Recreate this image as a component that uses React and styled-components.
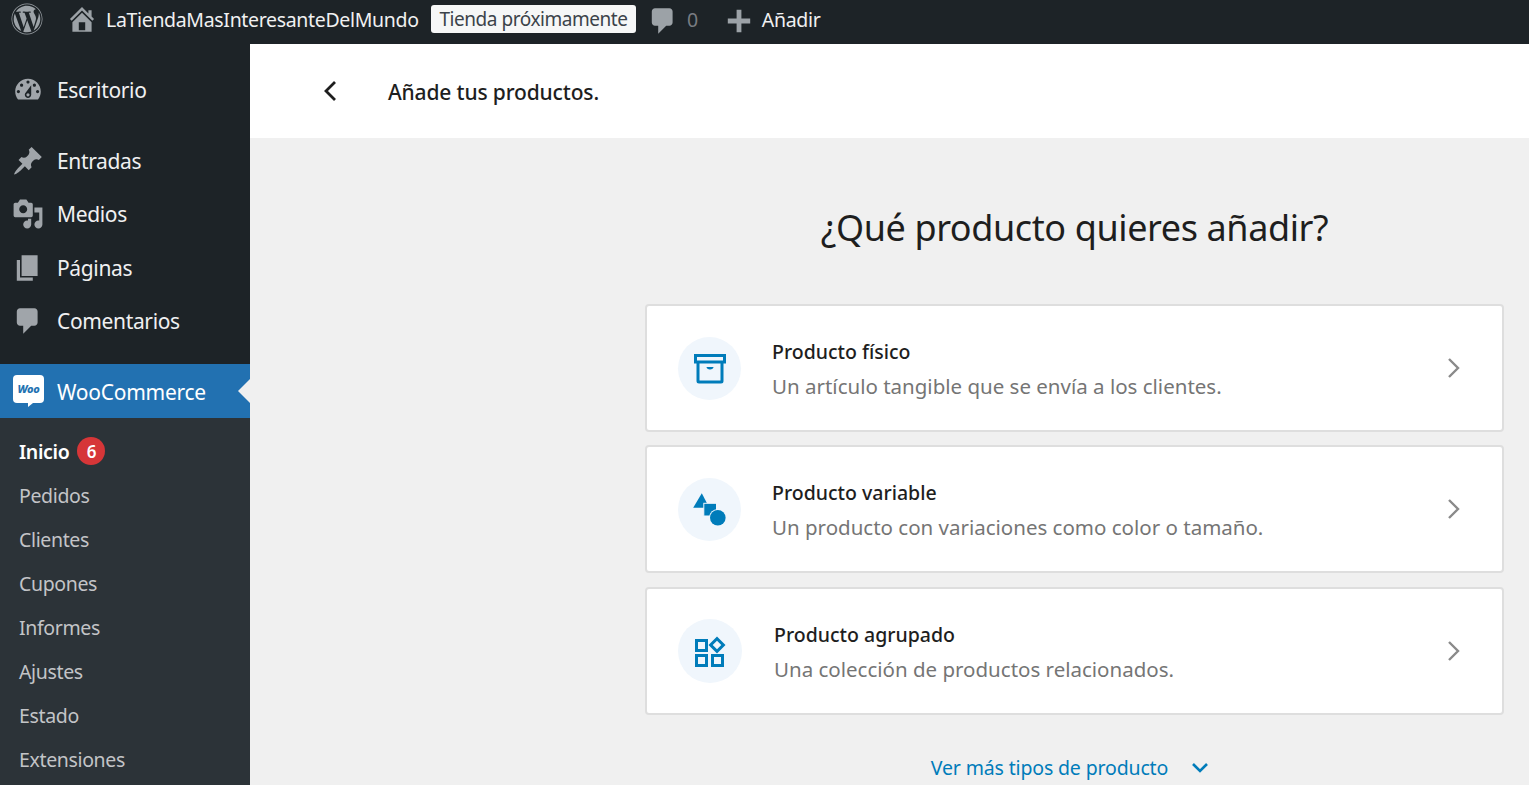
import React from "react";
import styled, { createGlobalStyle } from "styled-components";
import { FaWordpress } from "react-icons/fa";

const GlobalStyle = createGlobalStyle`
  html, body {
    margin: 0;
    padding: 0;
    height: 785px;
    overflow: hidden;
    background: #f0f0f0;
    font-family: "Noto Sans", "Open Sans", sans-serif;
  }
  * { box-sizing: border-box; }
`;

const Page = styled.div`
  width: 1529px;
  height: 785px;
  display: flex;
  flex-direction: column;
  overflow: hidden;
`;

const TopBar = styled.div`
  height: 44px;
  flex: none;
  background: #1d2327;
  display: flex;
  align-items: center;
  color: #f0f0f1;
  font-size: 19.5px;
  letter-spacing: -0.33px;
`;

const BarIcon = styled.svg`
  fill: #9ca2a7;
  flex: none;
  margin-left: ${(p) => p.$left}px;
  margin-right: ${(p) => p.$right}px;
  margin-bottom: ${(p) => p.$lift}px;
`;

const Logo = styled(FaWordpress)`
  color: #9ca2a7;
  font-size: 32px;
  margin-left: 11px;
  margin-right: 23px;
  margin-bottom: 6px;
  flex: none;
`;

const BarText = styled.span`
  white-space: nowrap;
  margin-bottom: 6px;
`;

const SiteName = styled(BarText)`
  width: 312px;
`;

const ComingSoon = styled.span`
  margin-left: 13px;
  margin-bottom: 6px;
  width: 205px;
  height: 28px;
  background: #f6f7f7;
  border-radius: 3px;
  color: #3c434a;
  font-size: 19px;
  letter-spacing: -0.45px;
  display: flex;
  align-items: center;
  justify-content: center;
  white-space: nowrap;
`;

const CommentCount = styled(BarText)`
  color: #787c82;
  margin-left: 8px;
`;

const Body = styled.div`
  flex: 1;
  display: flex;
  min-height: 0;
`;

const Sidebar = styled.nav`
  width: 250px;
  flex: none;
  background: #1d2327;
  padding-top: 19px;
`;

const MenuItem = styled.div`
  height: 53.5px;
  display: flex;
  align-items: center;
  color: #f0f0f1;
  font-size: 21px;
  letter-spacing: -0.35px;
  margin-bottom: ${(p) => p.$gap || 0}px;
`;

const MenuIcon = styled.svg`
  width: 32px;
  height: 32px;
  fill: #a0a5aa;
  margin-left: 12px;
  margin-right: 13px;
  flex: none;
`;

const ActiveItem = styled.div`
  position: relative;
  height: 54px;
  margin-top: 16px;
  padding-top: 1px;
  background: #2271b1;
  display: flex;
  align-items: center;
  color: #fff;
  font-size: 21px;
  letter-spacing: -0.27px;
  &::after {
    content: "";
    position: absolute;
    right: 0;
    top: 15px;
    border: 12px solid transparent;
    border-right-color: #f0f0f0;
    border-left-width: 0;
  }
`;

const WooBadge = styled.span`
  position: relative;
  width: 31px;
  height: 28px;
  margin-left: 13px;
  margin-right: 13px;
  margin-top: -5px;
  background: #fff;
  border-radius: 4px;
  color: #2271b1;
  font-size: 11px;
  font-weight: 800;
  font-style: italic;
  line-height: 27px;
  text-align: center;
  letter-spacing: -0.3px;
  &::after {
    content: "";
    position: absolute;
    left: 15px;
    bottom: -4px;
    border-top: 4px solid #fff;
    border-right: 5px solid transparent;
  }
`;

const SubMenu = styled.div`
  background: #2c3338;
  padding: 11px 0 0 19px;
  flex: 1;
`;

const SubItem = styled.div`
  height: 44px;
  display: flex;
  align-items: center;
  font-size: 19.5px;
  letter-spacing: -0.35px;
  color: ${(p) => (p.$active ? "#fff" : "#c3c4c7")};
  font-weight: ${(p) => (p.$active ? 600 : 400)};
`;

const CountBadge = styled.span`
  width: 28px;
  height: 28px;
  border-radius: 50%;
  background: #d63638;
  color: #fff;
  margin-left: 8px;
  font-size: 17px;
  font-weight: 600;
  display: flex;
  align-items: center;
  justify-content: center;
`;

const SideColumn = styled.div`
  display: flex;
  flex-direction: column;
  height: 100%;
`;

const Main = styled.main`
  flex: 1;
  min-width: 0;
  display: flex;
  flex-direction: column;
`;

const Header = styled.header`
  height: 94px;
  background: #fff;
  display: flex;
  align-items: center;
  padding-left: 72px;
  padding-top: 2px;
  color: #1e1e1e;
  font-size: 21px;
  letter-spacing: -0.15px;
  font-weight: 500;
`;

const BackIcon = styled.svg`
  width: 18px;
  height: 24px;
  margin-right: 48px;
  margin-top: -3px;
  fill: none;
  stroke: #1e1e1e;
  stroke-width: 2.8;
`;

const Content = styled.div`
  padding: 60px 25px 0 395px;
  display: flex;
  flex-direction: column;
`;

const Title = styled.h1`
  margin: 0 0 47px;
  height: 59px;
  line-height: 59px;
  font-size: 36px;
  letter-spacing: -0.4px;
  font-weight: 400;
  color: #1e1e1e;
  text-align: center;
`;

const Card = styled.div`
  height: 128px;
  margin-bottom: ${(p) => p.$gap}px;
  background: #fff;
  border: 2px solid #dedede;
  border-radius: 4px;
  display: flex;
  align-items: center;
  padding-left: 31px;
  padding-right: 41.5px;
`;

const IconCircle = styled.div`
  width: ${(p) => (p.$wide ? 64 : 63)}px;
  height: ${(p) => (p.$wide ? 64 : 63)}px;
  border-radius: 50%;
  background: #f0f6fc;
  margin-right: ${(p) => (p.$wide ? 32 : 31)}px;
  flex: none;
  display: flex;
  align-items: center;
  justify-content: center;
`;

const CardIcon = styled.svg`
  width: 40px;
  height: 40px;
  fill: #007cba;
  flex: none;
`;

const CardText = styled.div`
  flex: 1;
  margin-top: 5px;
`;

const CardTitle = styled.div`
  font-size: 19.5px;
  font-weight: 500;
  color: #1e1e1e;
  line-height: 31px;
`;

const CardDesc = styled.div`
  font-size: 20.5px;
  color: #757575;
  line-height: 39px;
`;

const Chevron = styled.svg`
  width: 14px;
  height: 22px;
  fill: none;
  stroke: #8a8a8a;
  stroke-width: 2.4;
  flex: none;
`;

const MoreLink = styled.div`
  margin-top: 39px;
  display: flex;
  align-items: center;
  justify-content: center;
  color: #007cba;
  font-size: 19.5px;
  letter-spacing: -0.15px;
  gap: 23px;
  padding-right: 9px;
`;

const DownIcon = styled.svg`
  width: 18px;
  height: 12px;
  fill: none;
  stroke: #007cba;
  stroke-width: 2.6;
`;

const menu = [
  {
    label: "Escritorio",
    gap: 17.5,
    d: "M3.76 16h12.48c1.1-1.37 1.76-3.11 1.76-5 0-4.42-3.58-8-8-8s-8 3.58-8 8c0 1.89.66 3.63 1.76 5zM10 4c.55 0 1 .45 1 1s-.45 1-1 1-1-.45-1-1 .45-1 1-1zM6 6c.55 0 1 .45 1 1s-.45 1-1 1-1-.45-1-1 .45-1 1-1zm8 0c.55 0 1 .45 1 1s-.45 1-1 1-1-.45-1-1 .45-1 1-1zm-5.37 5.55L12 7v6c0 1.1-.9 2-2 2s-2-.9-2-2c0-.57.24-1.08.63-1.45zM4 10c.55 0 1 .45 1 1s-.45 1-1 1-1-.45-1-1 .45-1 1-1zm12 0c.55 0 1 .45 1 1s-.45 1-1 1-1-.45-1-1 .45-1 1-1zm-5 3c0-.55-.45-1-1-1s-1 .45-1 1 .45 1 1 1 1-.45 1-1z",
  },
  {
    label: "Entradas",
    d: "M10.44 3.02l1.82-1.82 6.36 6.35-1.83 1.82c-1.05-.68-2.48-.57-3.41.36l-.75.75c-.92.93-1.04 2.35-.35 3.41l-1.83 1.82-2.41-2.41-2.8 2.79c-.42.42-3.38 2.71-3.8 2.29s1.86-3.39 2.28-3.81l2.79-2.79L4.1 9.36l1.83-1.82c1.05.69 2.48.57 3.4-.36l.75-.75c.93-.92 1.05-2.35.36-3.41z",
  },
  {
    label: "Medios",
    d: "M13 11V4c0-.55-.45-1-1-1h-1.67L9 1H5L3.67 3H2c-.55 0-1 .45-1 1v7c0 .55.45 1 1 1h10c.55 0 1-.45 1-1zM7 4.5c1.38 0 2.5 1.12 2.5 2.5S8.38 9.5 7 9.5 4.5 8.38 4.5 7 5.62 4.5 7 4.5zM14 6h5v10.5c0 1.38-1.12 2.5-2.5 2.5S14 17.88 14 16.5s1.12-2.5 2.5-2.5c.17 0 .34.02.5.05V9h-3V6zm-4 8.05V13h2v3.5c0 1.38-1.12 2.5-2.5 2.5S7 17.88 7 16.5 8.12 14 9.5 14c.17 0 .34.02.5.05z",
  },
  { label: "Páginas", d: "M6 15V2h10v13H6zm-1 1h8v2H3V5h2v11z" },
  {
    label: "Comentarios",
    d: "M5 2h9c1.1 0 2 .9 2 2v7c0 1.1-.9 2-2 2h-2l-5 5v-5H5c-1.1 0-2-.9-2-2V4c0-1.1.9-2 2-2z",
  },
];

const subMenu = ["Pedidos", "Clientes", "Cupones", "Informes", "Ajustes", "Estado", "Extensiones"];

const ArchiveIcon = () => (
  <CardIcon viewBox="0 0 40 40">
    <path
      fillRule="evenodd"
      d="M4 6h32v9.5h-2.5V33a2.5 2.5 0 0 1-2.5 2.5H9A2.5 2.5 0 0 1 6.5 33V15.5H4zM7 9v3.5h26V9zM9.5 15.5v17h21v-17zM16.5 19h7c0 1.5-1.5 2.5-3.5 2.5s-3.5-1-3.5-2.5z"
    />
  </CardIcon>
);

const ShapesIcon = () => (
  <CardIcon viewBox="0 0 40 40">
    <path d="M11.8 4.3l7.5 14.4H3.2z" />
    <rect x="13.8" y="14.3" width="12.7" height="12.7" stroke="#f0f6fc" strokeWidth="1" />
    <circle cx="27.8" cy="28.7" r="8.8" fill="#f0f6fc" />
    <circle cx="27.8" cy="28.7" r="7.8" />
  </CardIcon>
);

const GroupIcon = () => (
  <CardIcon viewBox="0 0 40 40">
    <path
      fillRule="evenodd"
      d="M5 8h13v13H5zM8 11v7h7v-7zM5 23h13v13H5zM8 26v7h7v-7zM21 23h13v13H21zM24 26v7h7v-7zM27 5.5l8.5 8.5-8.5 8.5-8.5-8.5zM27 9.7L22.7 14l4.3 4.3 4.3-4.3z"
    />
  </CardIcon>
);

const RightChevron = () => (
  <Chevron viewBox="0 0 14 22">
    <path d="M2 2l9 9-9 9" />
  </Chevron>
);

const products = [
  {
    title: "Producto físico",
    desc: "Un artículo tangible que se envía a los clientes.",
    icon: <ArchiveIcon />,
    gap: 13,
  },
  {
    title: "Producto variable",
    desc: "Un producto con variaciones como color o tamaño.",
    icon: <ShapesIcon />,
    gap: 14,
  },
  {
    title: "Producto agrupado",
    desc: "Una colección de productos relacionados.",
    icon: <GroupIcon />,
    gap: 0,
    wide: true,
  },
];

const App = () => (
  <Page>
    <GlobalStyle />
    <TopBar>
      <Logo />
      <BarIcon $left={0} $right={8} $lift={6} width="32" height="32" viewBox="0 0 20 20">
        <path d="M16 8.5l1.53 1.53-1.06 1.06L10 4.62l-6.47 6.47-1.06-1.06L10 2.5l4 4v-2h2v4zm-6-2.46l6 5.99V18H4v-5.97zM12 17v-5H8v5h4z" />
      </BarIcon>
      <SiteName>LaTiendaMasInteresanteDelMundo</SiteName>
      <ComingSoon>Tienda próximamente</ComingSoon>
      <BarIcon $left={11} $right={0} $lift={3} width="32" height="32" viewBox="0 0 20 20">
        <path d="M5 2h9c1.1 0 2 .9 2 2v7c0 1.1-.9 2-2 2h-2l-5 5v-5H5c-1.1 0-2-.9-2-2V4c0-1.1.9-2 2-2z" />
      </BarIcon>
      <CommentCount>0</CommentCount>
      <BarIcon $left={25} $right={7} $lift={3} width="32" height="32" viewBox="0 0 20 20">
        <path d="M17 8.5v3h-5.5V17h-3v-5.5H3v-3h5.5V3h3v5.5z" />
      </BarIcon>
      <BarText>Añadir</BarText>
    </TopBar>
    <Body>
      <Sidebar>
        <SideColumn>
          {menu.map((item) => (
            <MenuItem key={item.label} $gap={item.gap}>
              <MenuIcon viewBox="0 0 20 20">
                <path d={item.d} />
              </MenuIcon>
              {item.label}
            </MenuItem>
          ))}
          <ActiveItem>
            <WooBadge>Woo</WooBadge>
            WooCommerce
          </ActiveItem>
          <SubMenu>
            <SubItem $active>
              Inicio
              <CountBadge>6</CountBadge>
            </SubItem>
            {subMenu.map((label) => (
              <SubItem key={label}>{label}</SubItem>
            ))}
          </SubMenu>
        </SideColumn>
      </Sidebar>
      <Main>
        <Header>
          <BackIcon viewBox="0 0 18 24">
            <path d="M13 3l-9 9 9 9" />
          </BackIcon>
          Añade tus productos.
        </Header>
        <Content>
          <Title>¿Qué producto quieres añadir?</Title>
          {products.map((p) => (
            <Card key={p.title} $gap={p.gap}>
              <IconCircle $wide={p.wide}>{p.icon}</IconCircle>
              <CardText>
                <CardTitle>{p.title}</CardTitle>
                <CardDesc>{p.desc}</CardDesc>
              </CardText>
              <RightChevron />
            </Card>
          ))}
          <MoreLink>
            Ver más tipos de producto
            <DownIcon viewBox="0 0 18 12">
              <path d="M2 2l7 7 7-7" />
            </DownIcon>
          </MoreLink>
        </Content>
      </Main>
    </Body>
  </Page>
);

export default App;
